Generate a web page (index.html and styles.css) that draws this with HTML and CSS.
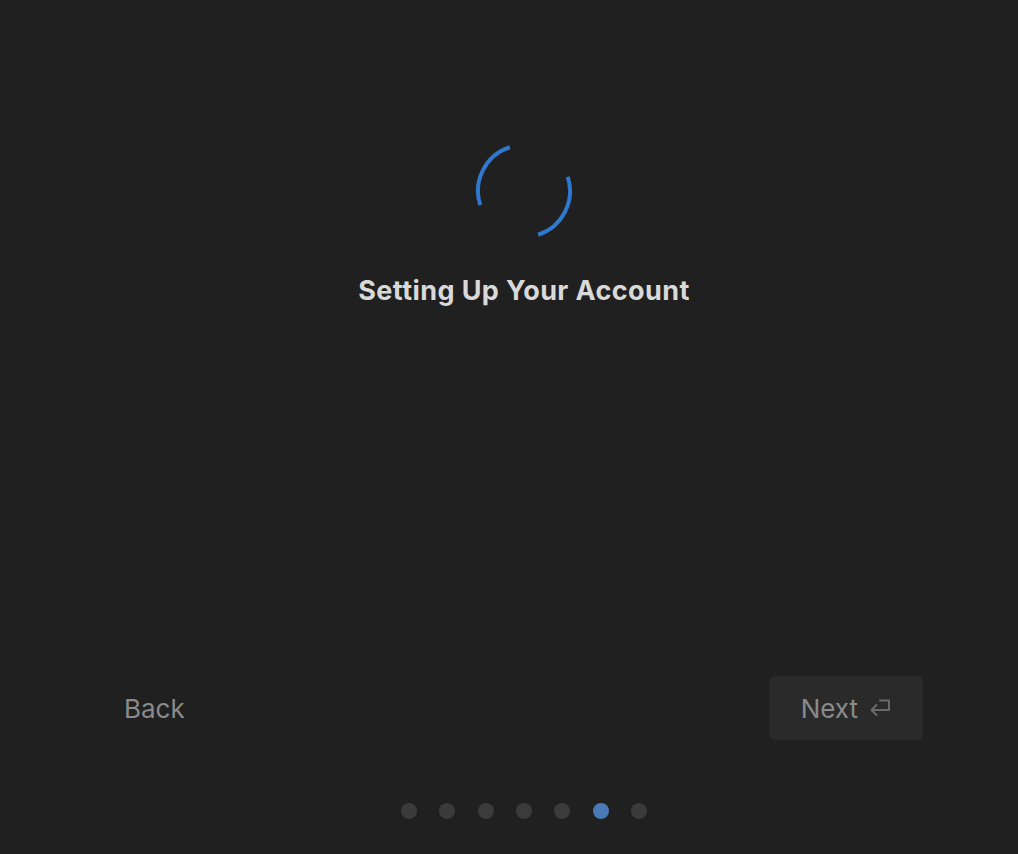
FILE: index.html
```html
<!DOCTYPE html>
<html lang="en">
<head>
    <meta charset="UTF-8">
    <meta name="viewport" content="width=device-width, initial-scale=1.0">
    <title>Setting Up Your Account</title>
    <link rel="stylesheet" href="styles.css">
</head>
<body>

    <div class="setup">
        <div class="status">
            <svg class="spinner" width="100" height="100" viewBox="0 0 100 100">
                <path d="M6.25 64.2 A46 46 0 0 1 35.8 6.25" />
                <path d="M93.75 35.8 A46 46 0 0 1 64.2 93.75" />
            </svg>
            <h1>Setting Up Your Account</h1>
        </div>

        <div class="actions">
            <button class="btn btn-back">Back</button>
            <button class="btn btn-next">
                Next
                <svg class="enter-icon" width="24" height="22" viewBox="0 0 24 22">
                    <path d="M12 3.5 H21 V13 H3.5 M8.5 8 L3.5 13 L8.5 18" />
                </svg>
            </button>
        </div>

        <div class="steps">
            <span class="dot"></span>
            <span class="dot"></span>
            <span class="dot"></span>
            <span class="dot"></span>
            <span class="dot"></span>
            <span class="dot active"></span>
            <span class="dot"></span>
        </div>
    </div>

</body>
</html>
```

FILE: styles.css
```css
body {
    margin: 0;
    height: 100vh;
    background-color: #202020;
    font-family: Inter, "Open Sans", sans-serif;
    color: #d9d9d9;
}

.setup {
    height: 100%;
    display: flex;
    flex-direction: column;
}

.status {
    display: flex;
    flex-direction: column;
    align-items: center;
    padding-top: 141px;
    padding-left: 30px;
    flex: 1;
}

.spinner {
    display: block;
}

.spinner path {
    fill: none;
    stroke: #2f78d0;
    stroke-width: 4;
}

.status h1 {
    margin: 33px 0 0;
    font-size: 27px;
    font-weight: 700;
    letter-spacing: 0.4px;
    color: #d9d9d9;
}

.actions {
    display: flex;
    justify-content: space-between;
    align-items: center;
    padding: 0 95px;
}

.btn {
    height: 64px;
    border: none;
    border-radius: 6px;
    font-family: inherit;
    font-size: 26px;
    color: #8a8a8a;
    cursor: pointer;
    display: flex;
    align-items: center;
}

.btn-back {
    background: none;
    padding: 0 28px 0 29px;
}

.btn-next {
    background-color: #2a2a2a;
    padding: 0 31px 0 32px;
    gap: 10px;
}

.enter-icon path {
    fill: none;
    stroke: #6a6a6a;
    stroke-width: 2;
    stroke-linecap: round;
    stroke-linejoin: round;
}

.steps {
    display: flex;
    justify-content: center;
    gap: 22.3px;
    padding: 63px 0 35px 30px;
}

.dot {
    width: 16px;
    height: 16px;
    border-radius: 50%;
    background-color: #3b3b3b;
}

.dot.active {
    background-color: #4a7ab5;
}
```
